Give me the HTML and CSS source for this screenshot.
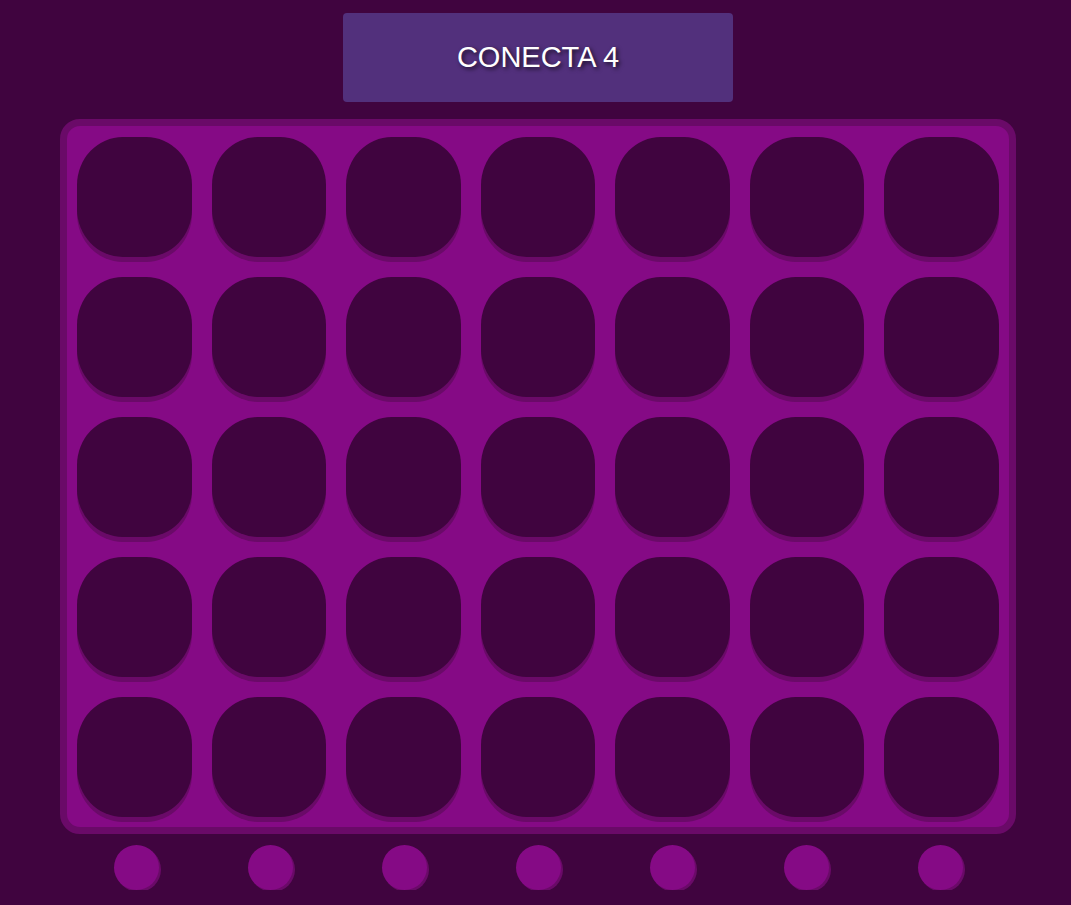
FILE: index.html
```html
<!DOCTYPE html>
<html lang="es">
<head>
    <meta charset="UTF-8">
    <meta name="viewport" content="width=device-width, initial-scale=1.0">
    <title>Conecta 4</title>
    <link rel="stylesheet" href="styles.css">
</head>
<body>
    <div class="game">
        <div class="title">CONECTA 4</div>

        <div class="board">
            <div class="cell"></div><div class="cell"></div><div class="cell"></div><div class="cell"></div><div class="cell"></div><div class="cell"></div><div class="cell"></div>
            <div class="cell"></div><div class="cell"></div><div class="cell"></div><div class="cell"></div><div class="cell"></div><div class="cell"></div><div class="cell"></div>
            <div class="cell"></div><div class="cell"></div><div class="cell"></div><div class="cell"></div><div class="cell"></div><div class="cell"></div><div class="cell"></div>
            <div class="cell"></div><div class="cell"></div><div class="cell"></div><div class="cell"></div><div class="cell"></div><div class="cell"></div><div class="cell"></div>
            <div class="cell"></div><div class="cell"></div><div class="cell"></div><div class="cell"></div><div class="cell"></div><div class="cell"></div><div class="cell"></div>
        </div>

        <div class="drops">
            <div class="drop"></div>
            <div class="drop"></div>
            <div class="drop"></div>
            <div class="drop"></div>
            <div class="drop"></div>
            <div class="drop"></div>
            <div class="drop"></div>
        </div>
    </div>
</body>
</html>
```

FILE: styles.css
```css
* {
    margin: 0;
    padding: 0;
    box-sizing: border-box;
}

body {
    background-color: #40043f;
    font-family: "Liberation Sans", Arial, sans-serif;
}

.game {
    width: 961px;
    margin: 0 auto;
    padding-left: 5px;
    padding-top: 13px;
}

.title {
    width: 390px;
    height: 89px;
    margin: 0 auto 17px;
    background-color: #52307c;
    border-radius: 4px;
    color: #fff;
    font-size: 29px;
    display: flex;
    align-items: center;
    justify-content: center;
    text-shadow: 2px 2px 4px rgba(0, 0, 0, 0.7);
}

.board {
    width: 956px;
    background-color: #850a85;
    border: 7px solid #6a0a68;
    border-radius: 20px;
    padding: 11px 10px 10px;
    display: grid;
    grid-template-columns: repeat(7, 1fr);
    column-gap: 20px;
    row-gap: 20px;
}

.cell {
    height: 120px;
    background-color: #40043f;
    border-radius: 40%;
    box-shadow: 0 5px 0 #6a0a68;
}

.drops {
    width: 956px;
    padding: 11px 0 0 9px;
    display: grid;
    grid-template-columns: repeat(7, 134px);
}

.drop {
    width: 45px;
    height: 45px;
    justify-self: center;
    border-radius: 50%;
    background-color: #850a85;
    box-shadow: 2px 2px 0 #6a0a68;
}
```
